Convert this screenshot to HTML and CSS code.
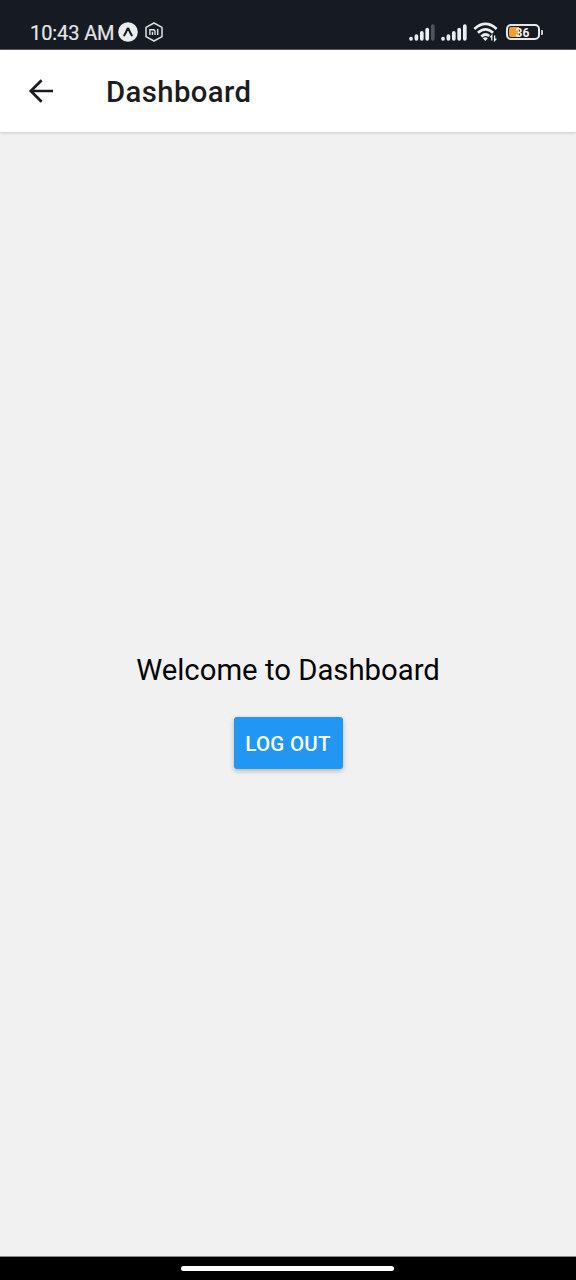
FILE: index.html
```html
<!DOCTYPE html>
<html lang="en">
<head>
<meta charset="utf-8">
<title>Dashboard</title>
<link rel="stylesheet" href="styles.css">
</head>
<body>
<div class="screen">
  <div class="status">
    <div class="status-left">
      <span class="clock">10:43 AM</span>
      <svg class="expo" width="20" height="20" viewBox="0 0 20 20"><circle cx="10" cy="10" r="9.8" fill="#ebedef"/><path d="M6.200 13.400C7.700 11.400 8.700 8.800 9.600 6.500H10.400C11.300 8.800 12.300 11.400 13.800 13.400" fill="none" stroke="#161b23" stroke-width="2" stroke-linecap="round" stroke-linejoin="round"/></svg>
      <svg class="mi" width="20" height="20" viewBox="0 0 20 20" fill="none" stroke="#dfe2e5"><path d="M10 1L18 5.300V14.700L10 19L2 14.700V5.300Z" stroke-width="1.500" stroke-linejoin="round"/><path d="M5.900 13V7.700H9.400Q11 7.700 11 9.300V13M8.450 9.700V13M13.700 7.100V13" stroke-width="1.400"/></svg>
    </div>
    <div class="status-right">
      <svg width="26" height="17" viewBox="0 0 26 17" stroke="#eceef0" stroke-width="3.700" stroke-linecap="round"><path d="M2 14.800V14.700M7.400 14.800V12M12.800 14.800V8.800M18.200 14.800V5.600"/><path d="M23.800 14.800V2.200" stroke="#50555c"/></svg>
      <svg class="signal" width="26" height="17" viewBox="0 0 26 17" stroke="#eceef0" stroke-width="3.700" stroke-linecap="round"><path d="M2 14.800V14.700M7.400 14.800V12M12.800 14.800V8.800M18.200 14.800V5.600M23.800 14.800V2.200"/></svg>
      <svg class="wifi" width="26" height="20" viewBox="0 0 26 20" fill="none" stroke="#eceef0"><path d="M1.400 6.900Q12.500 -3.200 23.600 6.900M4.900 10.800Q12.500 4 20.100 10.800M8.300 14.400Q12.500 10.800 16.200 14" stroke-width="2.700"/><path d="M9.700 16.200Q12.300 14.300 14.900 16.200L12.300 19Z" fill="#eceef0" stroke="none"/><path d="M18.800 18.500V13.500L17 15.400M21.600 13.500V18.500L23.400 16.600" stroke-width="1.300"/></svg>
      <div class="battery"><span class="charge"></span><span class="percent">36</span></div>
      <span class="tip"></span>
    </div>
  </div>
  <header class="header">
    <svg class="back" width="26" height="26" viewBox="0 0 26 26" fill="none" stroke="#1c1c1e" stroke-width="2.700"><path d="M25 13H3M13.600 2.200L2.800 13L13.600 23.800"/></svg>
    <h1 class="title">Dashboard</h1>
  </header>
  <main class="content">
    <p class="welcome">Welcome to Dashboard</p>
    <button class="logout">LOG OUT</button>
  </main>
  <div class="nav"><span class="handle"></span></div>
</div>
</body>
</html>
```
FILE: styles.css
```css
* { box-sizing: border-box; }
body { margin: 0; font-family: Roboto, sans-serif; }
.screen { width: 576px; height: 1280px; display: flex; flex-direction: column; background: #f1f1f1; overflow: hidden; }
.status { height: 50px; flex: none; display: flex; justify-content: space-between; padding: 15px 33px 0 30px; background: #161b23; border-bottom: 1px solid #565a5f; color: #e4e6e9; }
.status-left, .status-right { display: flex; align-items: center; height: 34px; }
.clock { width: 88px; font-size: 20px; line-height: 34px; letter-spacing: -0.1px; white-space: nowrap; padding-top: 2px; -webkit-text-stroke: 0.2px #e4e6e9; }
.mi { margin-left: 6px; }
.signal { margin-left: 6px; }
.wifi { margin-left: 6px; margin-right: 1px; }
.battery { position: relative; width: 34px; height: 16px; margin-left: 6px; border: 2px solid #e6e8ea; border-radius: 5px; }
.charge { position: absolute; left: 1px; top: 1px; width: 10px; height: 10px; border-radius: 2px 0 0 2px; background: #f3a12c; }
.percent { position: absolute; left: 0; right: 1px; top: 0; font-size: 12px; font-weight: 700; line-height: 14px; text-align: center; color: #f1f2f3; }
.tip { width: 2px; height: 5px; margin-left: 1px; background: #c8cbce; border-radius: 0 1px 1px 0; }
.header { height: 82px; flex: none; display: flex; align-items: center; padding-left: 28px; background: #fff; box-shadow: 0 1px 3px rgba(0,0,0,.16); }
.title { margin: 1px 0 0 52px; font-size: 29.3px; font-weight: 500; line-height: 40px; letter-spacing: 0.4px; color: #1c1c1e; }
.content { flex: 1; display: flex; flex-direction: column; align-items: center; justify-content: center; padding-top: 30px; }
.welcome { margin: 0 0 27px; font-size: 29.3px; line-height: 40px; color: #050505; white-space: nowrap; }
.logout { width: 109px; height: 52px; padding: 2px 0 0; border: 0; border-radius: 3px; background: #2196f3; color: #fff; font: 500 20.5px/50px Roboto, sans-serif; letter-spacing: 0.25px; white-space: nowrap; box-shadow: 0 2px 5px rgba(0,0,0,.26); }
.nav { height: 24px; flex: none; display: flex; justify-content: center; padding: 9px 1px 0 0; background: #000; border-top: 1px solid #8c8c8c; }
.handle { width: 213px; height: 5px; border-radius: 3px; background: #fff; }
```
